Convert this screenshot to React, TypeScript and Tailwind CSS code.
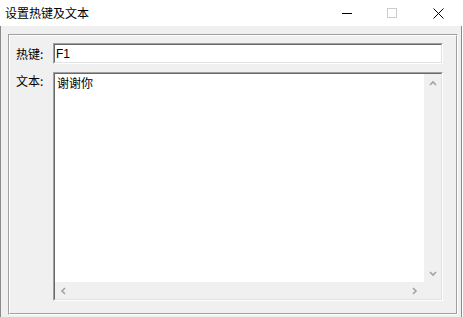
import React from 'react';

const cjk = { fontFamily: '"Noto Sans CJK SC", "Liberation Sans", sans-serif' };

const Chevron: React.FC<{ dir: 'up' | 'down' | 'left' | 'right' }> = ({ dir }) => {
  const pts = {
    up: '1,5 4,2 7,5',
    down: '1,2 4,5 7,2',
    left: '5,1 2,4 5,7',
    right: '2,1 5,4 2,7',
  }[dir];
  const w = dir === 'up' || dir === 'down' ? 8 : 7;
  const h = dir === 'up' || dir === 'down' ? 7 : 8;
  return (
    <svg width={w} height={h} viewBox={`0 0 ${w} ${h}`} fill="none">
      <polyline points={pts} stroke="#a3a3a3" strokeWidth="1.6" />
    </svg>
  );
};

const App: React.FC = () => {
  return (
    <div className="w-[463px] h-[317px] flex flex-col bg-white text-black overflow-hidden" style={cjk}>
      {/* Title bar */}
      <header className="h-[26px] flex items-center shrink-0">
        <span className="pl-[5px] text-[12px] leading-none flex-1 text-[#000]">设置热键及文本</span>
        <div className="flex h-full mr-[2px]">
          <button className="w-[45px] h-full flex items-center justify-center">
            <div className="w-[10px] h-px bg-black mt-[1px]" />
          </button>
          <button className="w-[46px] h-full flex items-center justify-center">
            <div className="w-[10px] h-[10px] border border-[#cccccc]" />
          </button>
          <button className="w-[46px] h-full flex items-center justify-center">
            <svg width="11" height="11" viewBox="0 0 11 11">
              <path d="M0.5 0.5 L10.5 10.5 M10.5 0.5 L0.5 10.5" stroke="#000" strokeWidth="1" />
            </svg>
          </button>
        </div>
      </header>

      {/* Body */}
      <main className="flex-1 w-[462px] bg-[#f0f0f0] border-l border-r border-[#8a8a8a] pl-[7px] pr-[3px] pt-[8px] pb-[2px] flex">
        {/* Group box (etched) */}
        <div className="flex-1 border-t border-l border-[#a0a0a0] border-r-white border-b-white border-r border-b flex">
          <div className="flex-1 border-t border-l border-t-white border-l-white border-r border-b border-r-[#a0a0a0] border-b-[#a0a0a0] pl-[6px] pt-[7px] grid grid-cols-[37px_390px] gap-y-[8px] content-start">
            <label className="text-[12px] leading-[21px] h-[21px]">热键:</label>
            <div className="h-[21px] border-t border-l border-[#a0a0a0] border-r-white border-b-white border-r border-b">
              <div className="h-full border-t border-l border-[#696969] border-r-[#e3e3e3] border-b-[#e3e3e3] border-r border-b bg-white pl-[1px] flex items-center">
                <span className="text-[12px] leading-none" style={{ fontFamily: '"Liberation Sans", sans-serif' }}>F1</span>
              </div>
            </div>

            <label className="text-[12px] leading-none pt-[3px]">文本:</label>
            <div className="h-[229px] border-t border-l border-[#a0a0a0] border-r-white border-b-white border-r border-b">
              <div className="h-full border-t border-l border-[#696969] border-r-[#e3e3e3] border-b-[#e3e3e3] border-r border-b bg-white grid grid-cols-[1fr_17px] grid-rows-[1fr_17px]">
                <div className="pl-[2px] pt-[3px] text-[12px] leading-none">谢谢你</div>
                <div className="bg-[#f0f0f0] flex flex-col items-center justify-between pt-[6px] pb-[5px]">
                  <Chevron dir="up" />
                  <Chevron dir="down" />
                </div>
                <div className="bg-[#f0f0f0] flex items-center justify-between pl-[5px] pr-[6px]">
                  <Chevron dir="left" />
                  <Chevron dir="right" />
                </div>
                <div className="bg-[#f0f0f0]" />
              </div>
            </div>
          </div>
        </div>
      </main>
    </div>
  );
};

export default App;
